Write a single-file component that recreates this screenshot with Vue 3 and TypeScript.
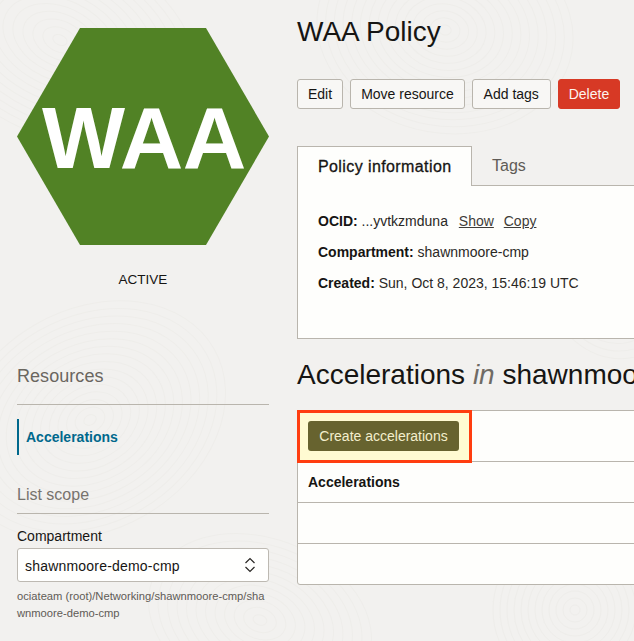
<script setup lang="ts">
const centers = [
  { x: 575, y: 610, n: 12, sx: 1, rot: 0 },
  { x: 445, y: 30, n: 15, sx: 1.25, rot: 10 },
  { x: 90, y: 420, n: 16, sx: 1.3, rot: -30 },
  { x: 260, y: 620, n: 12, sx: 1.4, rot: 20 },
  { x: 60, y: 40, n: 14, sx: 1.5, rot: 25 },
  { x: 610, y: 300, n: 8, sx: 1.2, rot: 40 },
]
const rings = centers.flatMap((c) =>
  Array.from({ length: c.n }, (_, i) => ({
    rx: (5 + i * 7) * c.sx,
    ry: 5 + i * 7,
    t: `translate(${c.x} ${c.y}) rotate(${c.rot})`,
  })),
)
const rows = [1, 2]
</script>

<template>
  <div class="page">
    <svg class="texture" width="634" height="641" aria-hidden="true">
      <ellipse v-for="(c, i) in rings" :key="i" :rx="c.rx" :ry="c.ry" :transform="c.t" />
    </svg>

    <aside class="side">
      <div class="hex"><span>WAA</span></div>
      <div class="status">ACTIVE</div>

      <h2 class="res-title">Resources</h2>
      <nav class="nav"><a class="nav-item">Accelerations</a></nav>

      <h3 class="scope-title">List scope</h3>
      <div class="field-label">Compartment</div>
      <div class="select">
        <span class="select-text">shawnmoore-demo-cmp</span>
        <svg width="12" height="16" viewBox="0 0 12 16" fill="none" stroke="#2a2825" stroke-width="1.2">
          <path d="M1.5 6 6 1.5 10.5 6" />
          <path d="M1.5 10 6 14.5 10.5 10" />
        </svg>
      </div>
      <div class="path">ociateam (root)/Networking/shawnmoore-cmp/shawnmoore-demo-cmp</div>
    </aside>

    <main class="main">
      <h1 class="title">WAA Policy</h1>
      <div class="actions">
        <button class="btn">Edit</button>
        <button class="btn">Move resource</button>
        <button class="btn tags">Add tags</button>
        <button class="btn danger">Delete</button>
      </div>

      <div class="tabs">
        <div class="tab active">Policy information</div>
        <div class="tab">Tags</div>
        <div class="tab-rest"></div>
      </div>
      <section class="panel">
        <p><b>OCID:</b> ...yvtkzmduna <a class="first">Show</a> <a>Copy</a></p>
        <p><b>Compartment:</b> shawnmoore-cmp</p>
        <p><b>Created:</b> Sun, Oct 8, 2023, 15:46:19 UTC</p>
      </section>

      <h2 class="sub">Accelerations <i>in</i> shawnmoore-cmp</h2>

      <section class="table">
        <div class="toolbar">
          <div class="highlight"><button class="create">Create accelerations</button></div>
        </div>
        <div class="row head">Accelerations</div>
        <div v-for="r in rows" :key="r" class="row"></div>
      </section>
    </main>
  </div>
</template>

<style>
html, body { margin: 0; overflow: hidden; background: #f2f1ef; }
</style>

<style scoped>
.page {
  position: relative;
  width: 634px;
  height: 641px;
  overflow: hidden;
  display: flex;
  gap: 28px;
  padding-left: 17px;
  box-sizing: border-box;
  background: #f2f1ef;
  font-family: "Liberation Sans", Arial, sans-serif;
  font-size: 14px;
  color: #161513;
}
.texture { position: absolute; left: 0; top: 0; fill: none; stroke: #eeedea; stroke-width: 1; }
.side, .main { position: relative; flex: none; }
.side { width: 252px; padding-top: 28px; }
.main { width: 520px; }

.hex {
  width: 252px;
  height: 217px;
  background: #518225;
  clip-path: polygon(25% 0, 75% 0, 100% 50%, 75% 100%, 25% 100%, 0 50%);
  display: flex;
  justify-content: center;
  color: #fff;
  font-weight: 700;
  font-size: 88px;
  line-height: 100px;
  letter-spacing: -.5px;
}
.hex span { margin: 60px 0 0 2px; height: 100px; }
.status { margin-top: 27px; text-align: center; font-size: 13.5px; line-height: 16px; }

.res-title {
  margin: 76px 0 0;
  padding-bottom: 16px;
  height: 24px;
  border-bottom: 1px solid #b9b5ad;
  font-size: 18px;
  font-weight: 400;
  line-height: 24px;
  color: #6a665f;
  letter-spacing: .05px;
}
.nav { margin-top: 14px; }
.nav-item {
  display: block;
  height: 36px;
  line-height: 36px;
  padding-left: 7px;
  border-left: 2px solid #00688c;
  color: #00688c;
  font-weight: 700;
}
.scope-title {
  margin: 28px 0 0;
  height: 22px;
  padding-bottom: 8px;
  border-bottom: 1px solid #b9b5ad;
  font-size: 16px;
  font-weight: 400;
  line-height: 24px;
  color: #77736d;
}
.field-label { margin-top: 13px; line-height: 18px; height: 18px; }
.select {
  margin-top: 3px;
  height: 34px;
  box-sizing: border-box;
  border: 1px solid #bdb9b2;
  border-radius: 3px;
  background: #fffffe;
  display: flex;
  align-items: center;
  justify-content: space-between;
  padding: 0 12px 0 7px;
  letter-spacing: .2px;
}
.select-text { padding-top: 2px; }
.path {
  margin-top: 6px;
  font-size: 11.2px;
  line-height: 17px;
  color: #5f5b56;
  word-break: break-all;
}

.title {
  margin: 14px 0 0;
  font-size: 28px;
  font-weight: 400;
  line-height: 36px;
  height: 36px;
}
.actions { display: flex; gap: 7px; margin-top: 29px; }
.btn {
  height: 30px;
  box-sizing: border-box;
  padding: 0 10px;
  border: 1px solid #b9b5ad;
  border-radius: 3px;
  background: #f8f7f5;
  color: #161513;
  font: inherit;
}
.tags { width: 79px; padding: 0; }
.danger { background: #d73925; border-color: #d73925; color: #fdf4ef; }

.tabs { display: flex; margin-top: 37px; height: 40px; }
.tab {
  box-sizing: border-box;
  padding: 0 20px;
  font-size: 16px;
  line-height: 40px;
  color: #5f5b56;
  border-bottom: 1px solid #b9b5ad;
}
.tab.active {
  width: 175px;
  background: #fefefc;
  color: #161513;
  border: 1px solid #b9b5ad;
  border-bottom: 0;
  letter-spacing: .4px;
  -webkit-text-stroke: .3px #161513;
  white-space: nowrap;
}
.tab-rest { flex: 1; border-bottom: 1px solid #b9b5ad; }
.panel {
  height: 154px;
  box-sizing: border-box;
  margin-top: -1px;
  background: #fefefc;
  border: 1px solid #b9b5ad;
  border-top: 0;
  padding: 27px 20px 0;
  color: #2a2825;
}
.panel p { margin: 0 0 13px; line-height: 18px; height: 18px; }
.panel b { color: #161513; }
.panel a { text-decoration: underline; margin-left: 6px; color: #3f3c38; }
.panel a.first { margin-left: 7px; }

.sub {
  margin: 18px 0 0;
  font-size: 28px;
  font-weight: 400;
  line-height: 36px;
  height: 36px;
  white-space: nowrap;
}
.sub i { color: #6f6b65; }

.table {
  margin-top: 17px;
  background: #fefefc;
  border: 1px solid #b9b5ad;
  border-radius: 3px;
}
.toolbar { height: 50px; border-bottom: 1px solid #b9b5ad; position: relative; }
.highlight {
  position: absolute;
  left: -1px;
  top: -1px;
  width: 175px;
  height: 53px;
  box-sizing: border-box;
  border: 3px solid #ff3d0f;
  background: #fffbd2;
  padding: 8px;
}
.create {
  display: block;
  width: 151px;
  height: 30px;
  padding: 0;
  border: 0;
  border-radius: 3px;
  background: #67632f;
  color: #f4efcd;
  font: inherit;
}
.row {
  height: 40px;
  border-bottom: 1px solid #b9b5ad;
  padding-left: 10px;
  line-height: 40px;
}
.row:last-child { border-bottom: 0; }
.head { font-weight: 700; }
</style>
